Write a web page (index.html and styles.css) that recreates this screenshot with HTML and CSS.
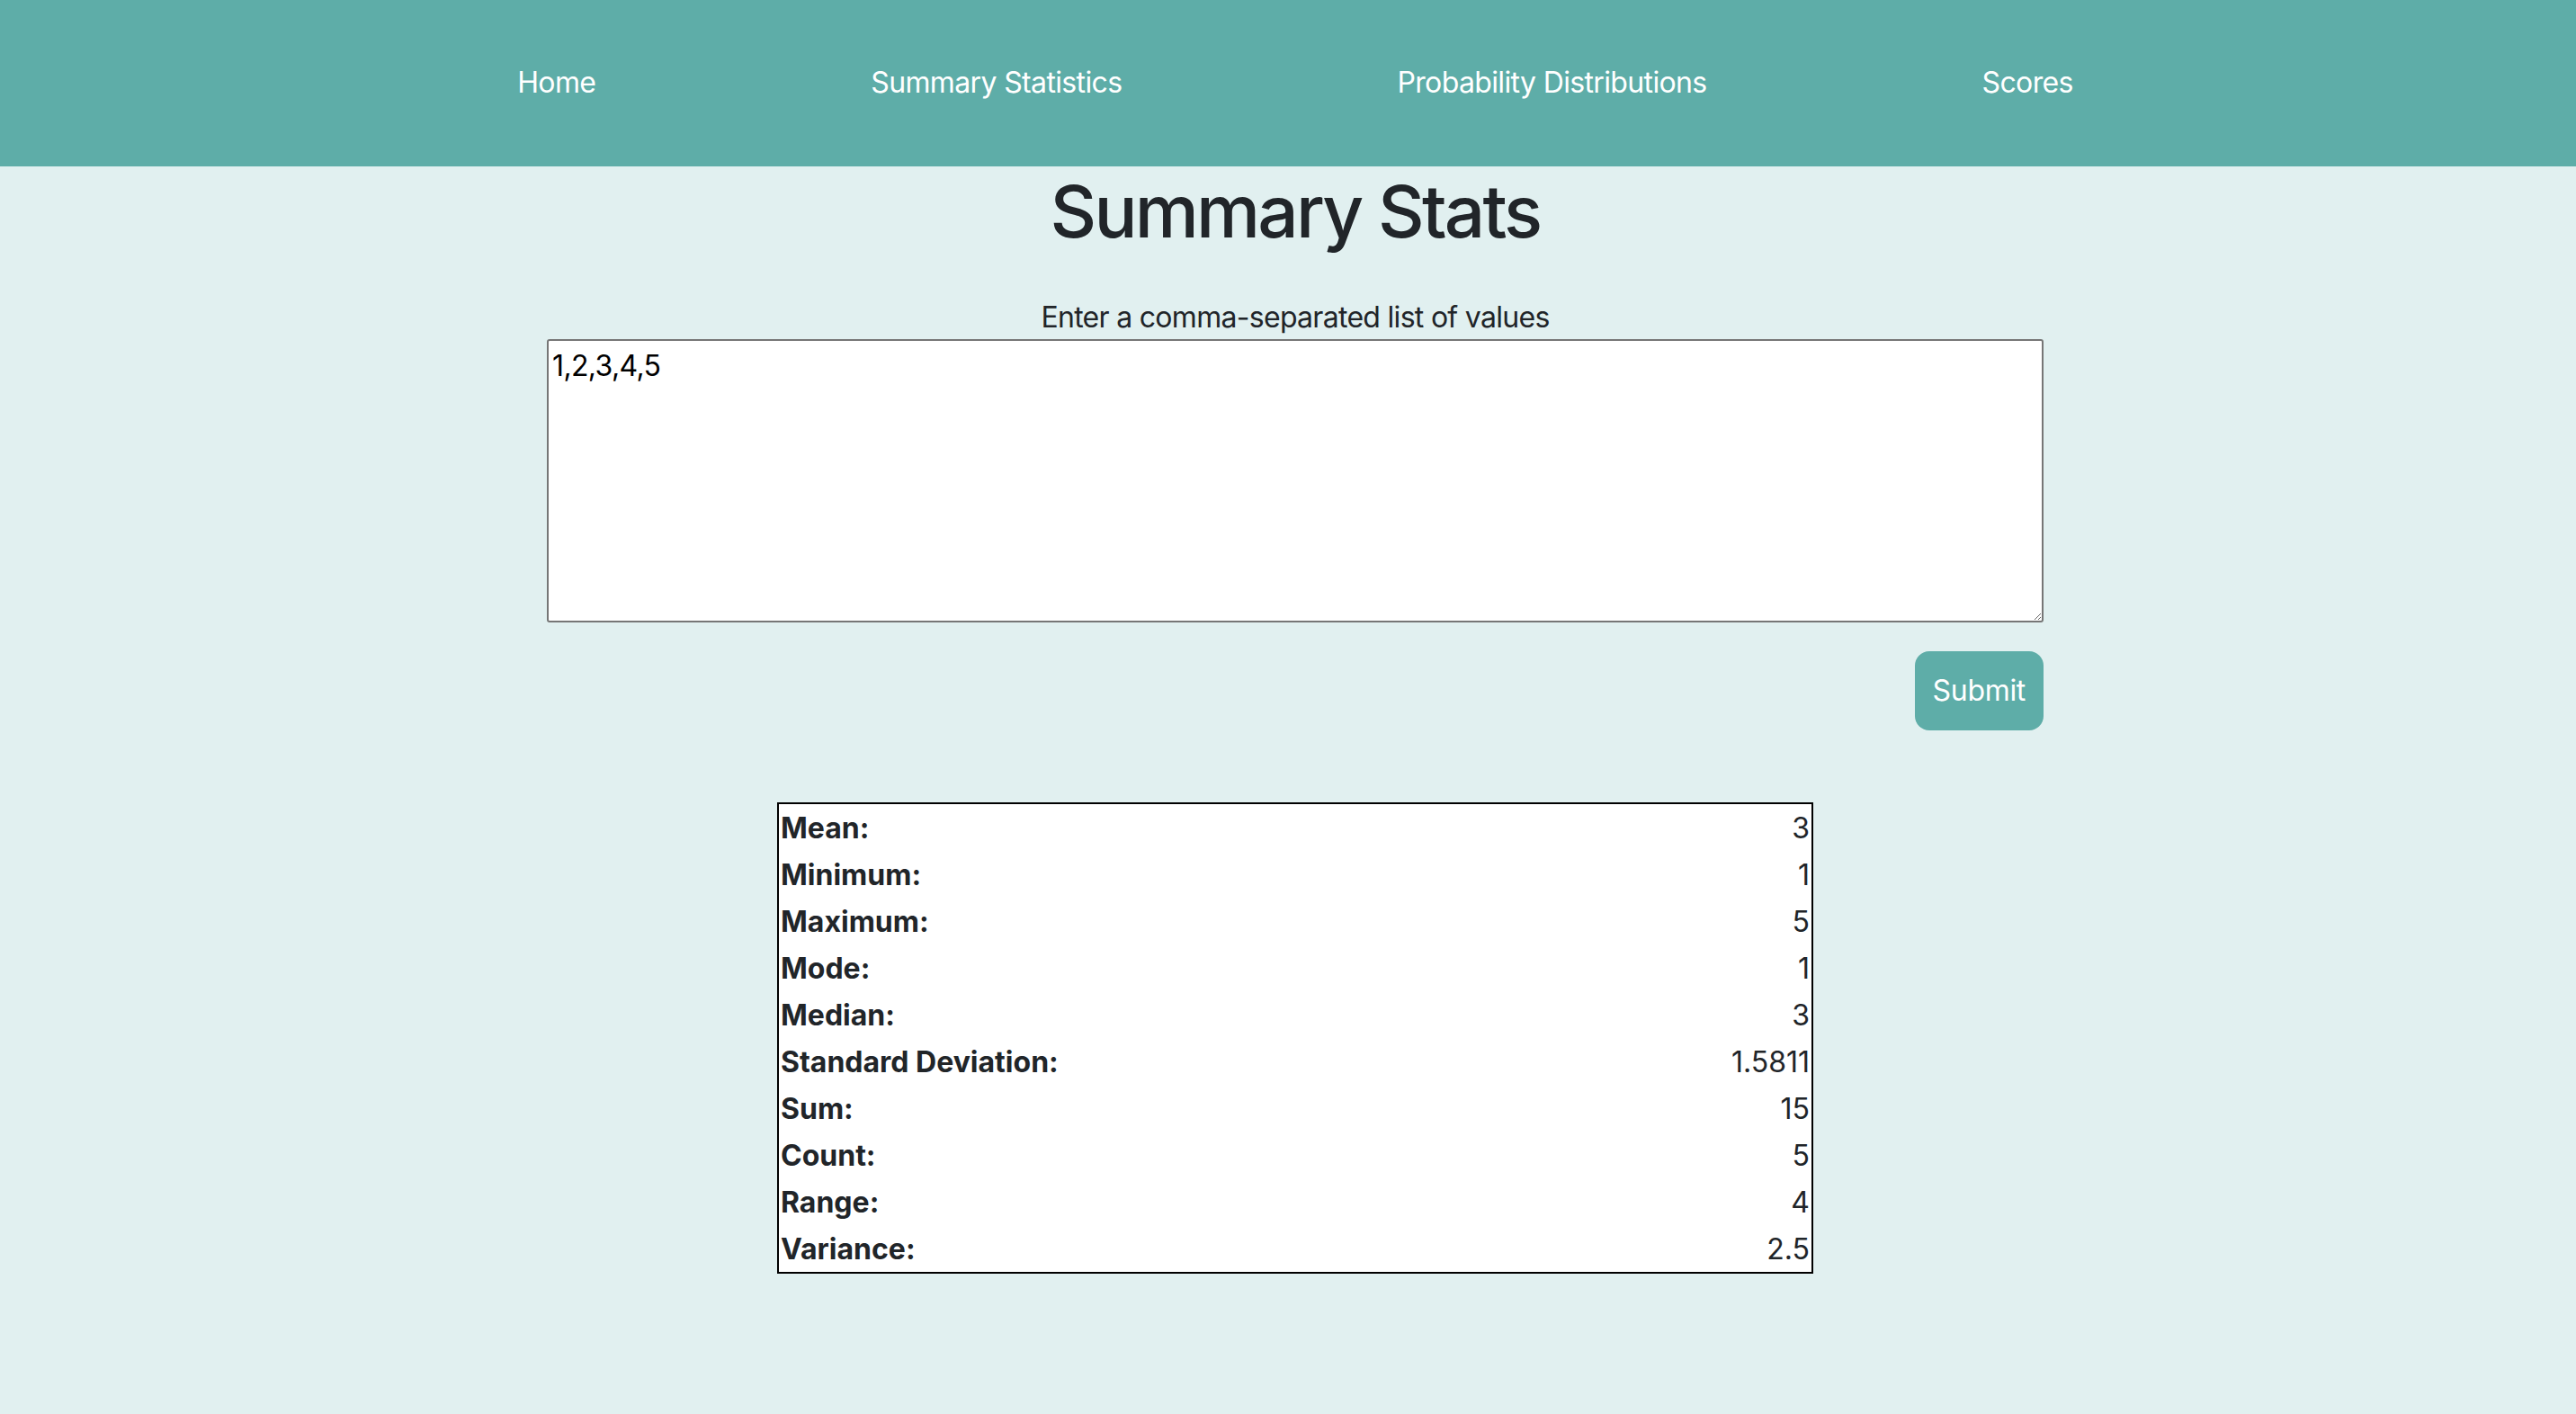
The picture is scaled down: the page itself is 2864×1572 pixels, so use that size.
FILE: index.html
```html
<!DOCTYPE html>
<html lang="en">
<head>
<meta charset="utf-8">
<title>Summary Stats</title>
<link rel="stylesheet" href="styles.css">
</head>
<body>
<nav class="navbar">
  <ul class="nav-list">
    <li><a class="nav-link" href="#">Home</a></li>
    <li><a class="nav-link" href="#">Summary Statistics</a></li>
    <li><a class="nav-link" href="#">Probability Distributions</a></li>
    <li><a class="nav-link" href="#">Scores</a></li>
  </ul>
</nav>
<main class="page">
  <h1 class="title">Summary Stats</h1>
  <form class="stats-form">
    <label class="form-label" for="values">Enter a comma-separated list of values</label>
    <textarea id="values" class="values-input">1,2,3,4,5</textarea>
    <div class="form-actions">
      <button type="button" class="submit-btn">Submit</button>
    </div>
  </form>
  <table class="results">
    <tbody>
      <tr><th>Mean:</th><td>3</td></tr>
      <tr><th>Minimum:</th><td>1</td></tr>
      <tr><th>Maximum:</th><td>5</td></tr>
      <tr><th>Mode:</th><td>1</td></tr>
      <tr><th>Median:</th><td>3</td></tr>
      <tr><th>Standard Deviation:</th><td>1.5811</td></tr>
      <tr><th>Sum:</th><td>15</td></tr>
      <tr><th>Count:</th><td>5</td></tr>
      <tr><th>Range:</th><td>4</td></tr>
      <tr><th>Variance:</th><td>2.5</td></tr>
    </tbody>
  </table>
</main>
</body>
</html>
```
FILE: styles.css
```css
* { box-sizing: border-box; }

html, body {
  margin: 0;
  padding: 0;
}

body {
  background: #e1f0f0;
  color: #212529;
  font-family: Inter, "Noto Sans", "Liberation Sans", sans-serif;
  font-size: 32px;
  line-height: 1.5;
}

.navbar {
  background: #5eada8;
  height: 185px;
  padding-left: 16px;
  padding-bottom: 2px;
  display: flex;
  align-items: center;
  justify-content: center;
}

.nav-list {
  list-style: none;
  margin: 0;
  padding: 0;
  display: flex;
  gap: 306px;
}

.nav-link {
  color: #ffffff;
  text-decoration: none;
  font-size: 32px;
  line-height: 48px;
  letter-spacing: -0.02em;
}

.page {
  padding-left: 16px;
  padding-bottom: 100px;
}

.title {
  margin: 2px 0 44px;
  font-size: 80px;
  font-weight: 500;
  line-height: 96px;
  letter-spacing: -0.035em;
  text-align: center;
}

.stats-form {
  width: 1664px;
  margin: 0 auto;
}

.form-label {
  display: block;
  padding-top: 2px;
  text-align: center;
  line-height: 48px;
  letter-spacing: -0.022em;
}

.values-input {
  display: block;
  width: 100%;
  height: 315px;
  border: 2px solid #767676;
  border-radius: 3px;
  padding: 4px;
  font-family: inherit;
  font-size: 32px;
  line-height: 48px;
  letter-spacing: -0.02em;
  color: #000000;
  background: #ffffff;
}

.form-actions {
  display: flex;
  justify-content: flex-end;
  margin-top: 32px;
}

.submit-btn {
  background: #5eada8;
  color: #ffffff;
  border: none;
  border-radius: 16px;
  padding: 20px;
  font-family: inherit;
  font-size: 32px;
  line-height: 48px;
  letter-spacing: -0.01em;
}

.results {
  width: 1152px;
  margin: 80px auto 0;
  border: 2px solid #000000;
  border-collapse: collapse;
  background: #ffffff;
}

.results th,
.results td {
  padding: 3px 2px 1px;
  line-height: 48px;
  font-size: 32px;
}

.results th {
  text-align: left;
  font-weight: 700;
}

.results td {
  text-align: right;
}
```
